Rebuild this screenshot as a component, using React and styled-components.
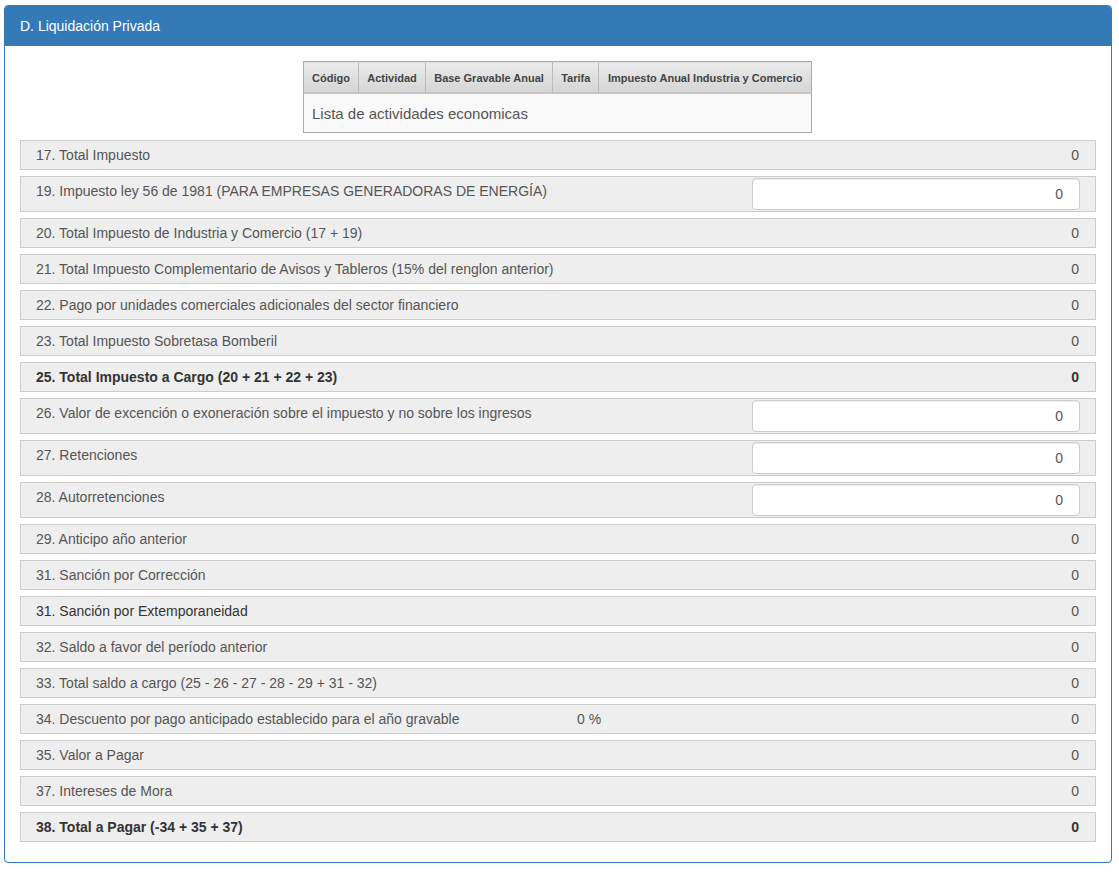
import React from "react";
import styled, { createGlobalStyle } from "styled-components";

const GlobalStyle = createGlobalStyle`
  body {
    margin: 0;
    background: #fff;
    font-family: "Liberation Sans", Arial, sans-serif;
    font-size: 14px;
    color: #555;
  }
`;

const rows = [
  { label: "17. Total Impuesto", value: "0" },
  { label: "19. Impuesto ley 56 de 1981 (PARA EMPRESAS GENERADORAS DE ENERGÍA)", value: "0", input: true },
  { label: "20. Total Impuesto de Industria y Comercio (17 + 19)", value: "0" },
  { label: "21. Total Impuesto Complementario de Avisos y Tableros (15% del renglon anterior)", value: "0" },
  { label: "22. Pago por unidades comerciales adicionales del sector financiero", value: "0" },
  { label: "23. Total Impuesto Sobretasa Bomberil", value: "0" },
  { label: "25. Total Impuesto a Cargo (20 + 21 + 22 + 23)", value: "0", bold: true },
  { label: "26. Valor de excención o exoneración sobre el impuesto y no sobre los ingresos", value: "0", input: true },
  { label: "27. Retenciones", value: "0", input: true },
  { label: "28. Autorretenciones", value: "0", input: true },
  { label: "29. Anticipo año anterior", value: "0" },
  { label: "31. Sanción por Corrección", value: "0" },
  { label: "31. Sanción por Extemporaneidad", value: "0", dark: true },
  { label: "32. Saldo a favor del período anterior", value: "0" },
  { label: "33. Total saldo a cargo (25 - 26 - 27 - 28 - 29 + 31 - 32)", value: "0" },
  { label: "34. Descuento por pago anticipado establecido para el año gravable", value: "0", extra: "0 %" },
  { label: "35. Valor a Pagar", value: "0" },
  { label: "37. Intereses de Mora", value: "0" },
  { label: "38. Total a Pagar (-34 + 35 + 37)", value: "0", bold: true },
];

const columns = ["Código", "Actividad", "Base Gravable Anual", "Tarifa", "Impuesto Anual Industria y Comercio"];

const App = () => {
  return (
    <Page>
      <GlobalStyle />
      <Panel>
        <Heading>D. Liquidación Privada</Heading>
        <Body>
          <TableWrap>
            <Table>
              <thead>
                <tr>
                  {columns.map((c) => (
                    <Th key={c}>{c}</Th>
                  ))}
                </tr>
              </thead>
              <tbody>
                <tr>
                  <Td colSpan={5}>Lista de actividades economicas</Td>
                </tr>
              </tbody>
            </Table>
          </TableWrap>
          <Rows>
            {rows.map((r, i) => (
              <Row key={i} $input={r.input} $bold={r.bold}>
                <Label $input={r.input} $dark={r.dark}>
                  {r.label}
                </Label>
                <Extra>{r.extra}</Extra>
                {r.input ? (
                  <Input defaultValue={r.value} />
                ) : (
                  <Value>{r.value}</Value>
                )}
              </Row>
            ))}
          </Rows>
        </Body>
      </Panel>
    </Page>
  );
};

const Page = styled.div`
  padding: 5px 7px 8px 4px;
`;
const Panel = styled.div`
  border: 1px solid #337ab7;
  border-radius: 4px;
  overflow: hidden;
  background: #fff;
`;
const Heading = styled.div`
  background: #337ab7;
  color: #fff;
  height: 40px;
  line-height: 40px;
  padding: 0 15px;
  font-size: 14px;
`;
const Body = styled.div`
  padding: 15px 15px 20px 15px;
`;
const TableWrap = styled.div`
  display: flex;
  justify-content: center;
  margin-bottom: 7px;
  padding-right: 1px;
`;
const Table = styled.table`
  border-collapse: collapse;
  border: 1px solid #aaa;
  width: 509px;
`;
const Th = styled.th`
  height: 31px;
  padding: 0 8px;
  font-size: 11px;
  font-weight: bold;
  color: #444;
  background: linear-gradient(#ebebeb, #d4d4d4);
  border-left: 1px solid #bbb;
  border-bottom: 1px solid #c4c4c4;
  box-shadow: inset 0 -1px 0 #c8c8c8;
  white-space: nowrap;
  &:first-child {
    border-left: none;
  }
`;
const Td = styled.td`
  height: 38px;
  padding: 0 8px;
  font-size: 15px;
  color: #555;
  background: #f9f9f9;
  text-align: left;
`;
const Rows = styled.div`
  display: flex;
  flex-direction: column;
  gap: 6px;
`;
const Row = styled.div`
  display: grid;
  grid-template-columns: 541px 1fr auto;
  align-items: ${(p) => (p.$input ? "start" : "center")};
  height: ${(p) => (p.$input ? "34px" : "28px")};
  padding: 0 15px;
  background: #eee;
  border: 1px solid #ccc;
  font-weight: ${(p) => (p.$bold ? "bold" : "normal")};
  color: ${(p) => (p.$bold ? "#333" : "#555")};
`;
const Label = styled.div`
  white-space: nowrap;
  padding-top: ${(p) => (p.$input ? "6px" : "0")};
  ${(p) => p.$dark && "color: #333;"}
`;
const Extra = styled.div`
  white-space: nowrap;
`;
const Value = styled.div`
  text-align: right;
  padding-right: 1px;
`;
const Input = styled.input`
  width: 328px;
  height: 32px;
  box-sizing: border-box;
  margin-top: 1px;
  border: 1px solid #ccc;
  border-radius: 4px;
  background: #fff;
  text-align: right;
  padding: 0 16px 0 12px;
  font-family: inherit;
  font-size: 14px;
  color: #555;
  box-shadow: inset 0 1px 1px rgba(0, 0, 0, 0.075);
`;

export default App;
